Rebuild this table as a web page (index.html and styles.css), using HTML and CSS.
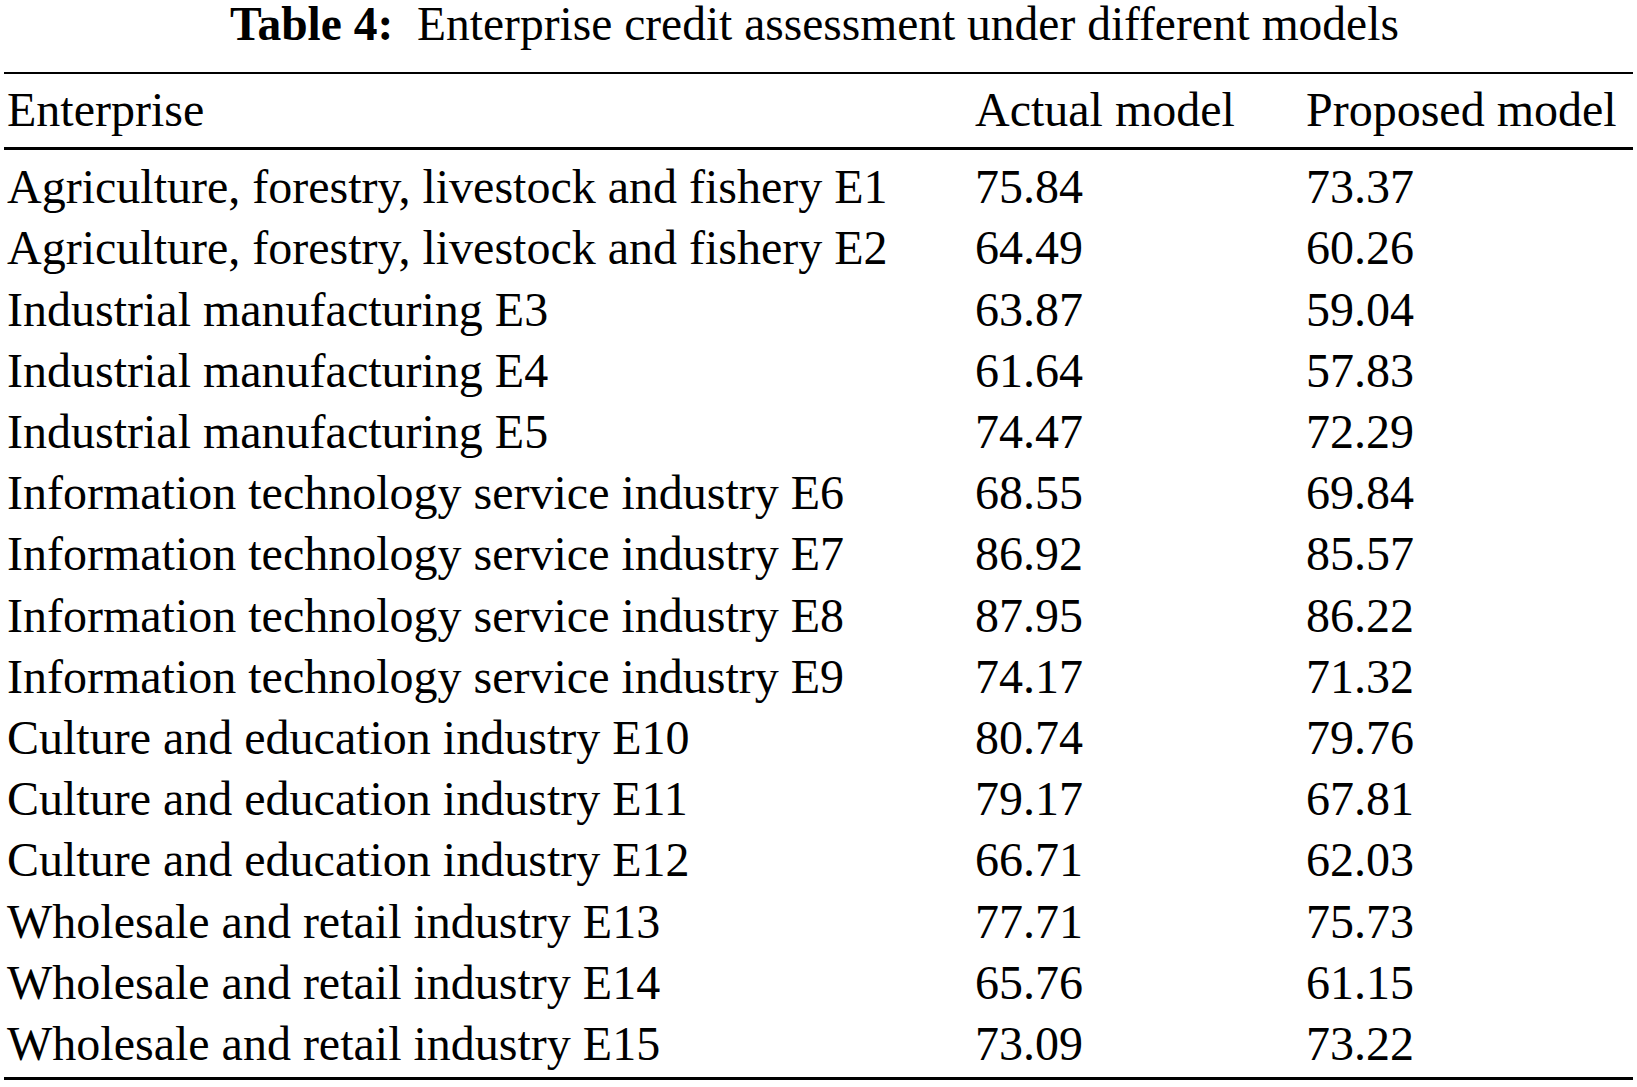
FILE: index.html
```html
<!DOCTYPE html>
<html>
<head>
<meta charset="utf-8">
<link rel="stylesheet" href="styles.css">
</head>
<body>
<div class="page">
  <div class="caption"><span class="label">Table 4:</span>&nbsp; Enterprise credit assessment under different models</div>
  <table class="data">
    <thead>
      <tr><th class="c1">Enterprise</th><th class="c2">Actual model</th><th class="c3">Proposed model</th></tr>
    </thead>
    <tbody>
      <tr><td>Agriculture, forestry, livestock and fishery E1</td><td>75.84</td><td>73.37</td></tr>
      <tr><td>Agriculture, forestry, livestock and fishery E2</td><td>64.49</td><td>60.26</td></tr>
      <tr><td>Industrial manufacturing E3</td><td>63.87</td><td>59.04</td></tr>
      <tr><td>Industrial manufacturing E4</td><td>61.64</td><td>57.83</td></tr>
      <tr><td>Industrial manufacturing E5</td><td>74.47</td><td>72.29</td></tr>
      <tr><td>Information technology service industry E6</td><td>68.55</td><td>69.84</td></tr>
      <tr><td>Information technology service industry E7</td><td>86.92</td><td>85.57</td></tr>
      <tr><td>Information technology service industry E8</td><td>87.95</td><td>86.22</td></tr>
      <tr><td>Information technology service industry E9</td><td>74.17</td><td>71.32</td></tr>
      <tr><td>Culture and education industry E10</td><td>80.74</td><td>79.76</td></tr>
      <tr><td>Culture and education industry E11</td><td>79.17</td><td>67.81</td></tr>
      <tr><td>Culture and education industry E12</td><td>66.71</td><td>62.03</td></tr>
      <tr><td>Wholesale and retail industry E13</td><td>77.71</td><td>75.73</td></tr>
      <tr><td>Wholesale and retail industry E14</td><td>65.76</td><td>61.15</td></tr>
      <tr><td>Wholesale and retail industry E15</td><td>73.09</td><td>73.22</td></tr>
    </tbody>
  </table>
</div>
</body>
</html>
```
FILE: styles.css
```css
html, body {
  margin: 0;
  padding: 0;
  background: #ffffff;
}
body {
  font-family: "Liberation Serif", "Times New Roman", serif;
  color: #000000;
}
.page {
  width: 1637px;
  padding: 0 4px;
  box-sizing: border-box;
}
.caption {
  text-align: center;
  font-size: 47.5px;
  line-height: 48px;
  height: 72px;
  box-sizing: border-box;
  padding-top: 0;
  padding-right: 8px;
  white-space: nowrap;
}
.caption .label {
  font-weight: bold;
}
.data {
  width: 1629px;
  border-collapse: collapse;
  font-size: 48px;
  table-layout: fixed;
}
.data th,
.data td {
  padding: 0 0 0 3px;
  text-align: left;
  font-weight: normal;
  line-height: 61.2px;
  white-space: nowrap;
  vertical-align: baseline;
}
.data th.c1 { width: 965px; }
.data th.c2 { width: 328px; }
.data th.c3 { width: auto; }
.data thead tr {
  border-top: 2px solid #000;
  border-bottom: 3px solid #000;
}
.data thead th {
  padding-top: 5px;
  padding-bottom: 7px;
}
.data tbody tr:first-child td {
  padding-top: 6px;
}
.data tbody tr:last-child td {
  padding-bottom: 3px;
}
.data tbody tr:last-child {
  border-bottom: 3px solid #000;
}
```
